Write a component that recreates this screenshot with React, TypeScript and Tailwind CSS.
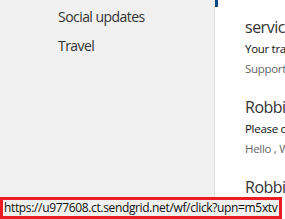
import React from "react";

const font = { fontFamily: '"Open Sans", "Noto Sans", sans-serif' };

function MailItem({ title, subject, preview }: { title: string; subject: string; preview: string }) {
  return (
    <div className="h-[80px] shrink-0 pl-[30px] pt-[8px] flex flex-col whitespace-nowrap">
      <div className="text-[16px] leading-[24px] text-[#333333] font-normal tracking-[-0.5px]">{title}</div>
      <div className="text-[11.5px] leading-[20px] text-[#111111] tracking-[-0.3px]">{subject}</div>
      <div className="text-[11.5px] leading-[19px] text-[#666666] tracking-[-0.3px]">{preview}</div>
    </div>
  );
}

export default function App() {
  return (
    <div className="relative w-[285px] h-[219px] overflow-hidden flex bg-white" style={font}>
      <div className="w-[215px] shrink-0 bg-[#eff0ef] border-r border-[#e1e1e1] flex flex-col pl-[58px] pt-[7px]">
        <div className="text-[14px] leading-[20px] text-[#333333] whitespace-nowrap tracking-[-0.55px]">Social updates</div>
        <div className="text-[14px] leading-[20px] text-[#333333] mt-[9px] whitespace-nowrap tracking-[-0.55px]">Travel</div>
      </div>
      <div className="flex-1 min-w-0 flex flex-col overflow-hidden">
        <div className="h-[7px] shrink-0 flex">
          <div className="w-[3px] h-full bg-[#0f4a85]" />
        </div>
        <MailItem title="service" subject="Your travel" preview="Support" />
        <MailItem title="Robbie" subject="Please confirm" preview="Hello , We" />
        <MailItem title="Robbie" subject="Please" preview="Hello" />
      </div>
      <div className="absolute left-0 top-[197px] w-[282px] h-[22px] border-[3px] border-[#ec1c24] bg-[#f0f0f0] overflow-hidden">
        <div className="text-[12px] leading-[16px] text-[#111111] whitespace-nowrap pl-[1px] tracking-[-0.35px]">
          https://u977608.ct.sendgrid.net/wf/click?upn=m5xtv
        </div>
      </div>
    </div>
  );
}
